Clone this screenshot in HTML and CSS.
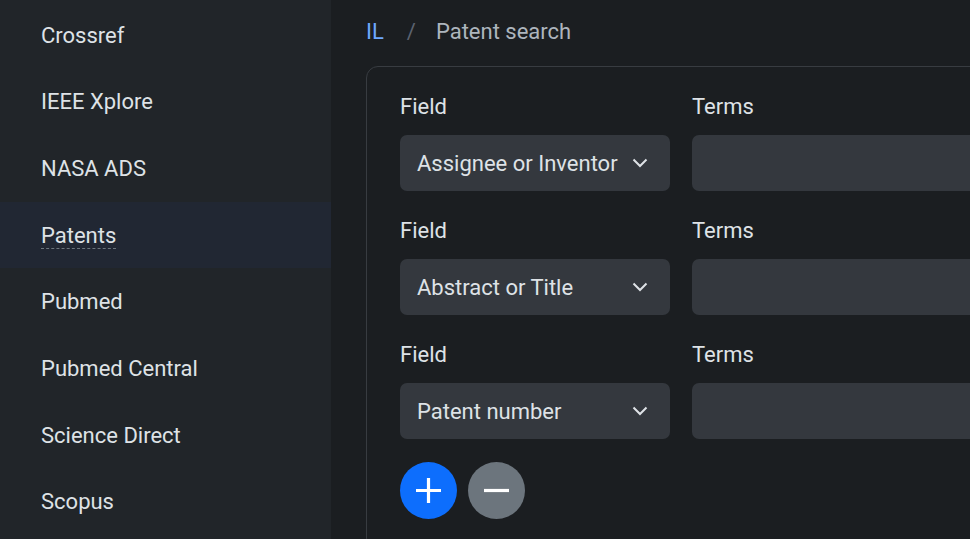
FILE: index.html
```html
<html lang="en">
<head>
    <link rel="stylesheet" href="styles.css">
</head>
<body>
    <div class="layout">
        <nav class="sidebar">
            <a class="side-item">Crossref</a>
            <a class="side-item">IEEE Xplore</a>
            <a class="side-item">NASA ADS</a>
            <a class="side-item active"><span class="dashed">Patents</span></a>
            <a class="side-item">Pubmed</a>
            <a class="side-item">Pubmed Central</a>
            <a class="side-item">Science Direct</a>
            <a class="side-item">Scopus</a>
        </nav>

        <main class="main">
            <div class="breadcrumb">
                <a class="crumb-link">IL</a>
                <span class="crumb-sep">/</span>
                <span class="crumb-current">Patent search</span>
            </div>

            <div class="search-card">
                <!-- one row per query term -->
                <div class="query-row">
                    <div class="field-col">
                        <label class="row-label">Field</label>
                        <div class="select-box">Assignee or Inventor
                            <svg class="chevron" width="16" height="10" viewBox="0 0 16 10"><polyline points="1.5,1.5 8,8 14.5,1.5" fill="none" stroke="#dee2e6" stroke-width="2"/></svg>
                        </div>
                    </div>
                    <div class="terms-col">
                        <label class="row-label">Terms</label>
                        <div class="terms-input"></div>
                    </div>
                </div>
                <div class="query-row">
                    <div class="field-col">
                        <label class="row-label">Field</label>
                        <div class="select-box">Abstract or Title
                            <svg class="chevron" width="16" height="10" viewBox="0 0 16 10"><polyline points="1.5,1.5 8,8 14.5,1.5" fill="none" stroke="#dee2e6" stroke-width="2"/></svg>
                        </div>
                    </div>
                    <div class="terms-col">
                        <label class="row-label">Terms</label>
                        <div class="terms-input"></div>
                    </div>
                </div>
                <div class="query-row">
                    <div class="field-col">
                        <label class="row-label">Field</label>
                        <div class="select-box">Patent number
                            <svg class="chevron" width="16" height="10" viewBox="0 0 16 10"><polyline points="1.5,1.5 8,8 14.5,1.5" fill="none" stroke="#dee2e6" stroke-width="2"/></svg>
                        </div>
                    </div>
                    <div class="terms-col">
                        <label class="row-label">Terms</label>
                        <div class="terms-input"></div>
                    </div>
                </div>

                <div class="row-buttons">
                    <button class="round-btn add-btn">
                        <svg width="25" height="25" viewBox="0 0 25 25"><path d="M12.5 0v25M0 12.5h25" stroke="#fff" stroke-width="3.2"/></svg>
                    </button>
                    <button class="round-btn remove-btn">
                        <svg width="25" height="25" viewBox="0 0 25 25"><path d="M0 12.5h25" stroke="#fff" stroke-width="3.2"/></svg>
                    </button>
                </div>
            </div>
        </main>
    </div>
</body>
</html>
```

FILE: styles.css
```css
body {
    font-family: Roboto, "Liberation Sans", Arial, sans-serif;
    background-color: #1b1e21;
    color: #dee2e6;
    margin: 0;
    padding: 0;
    font-size: 22px;
}
.layout {
    display: flex;
    height: 539px;
    overflow: hidden;
}
.sidebar {
    width: 331px;
    flex-shrink: 0;
    background-color: #212529;
    padding-top: 1.7px;
    display: flex;
    flex-direction: column;
}
.side-item {
    display: block;
    padding: 21px 41px 19px;
    line-height: 26.67px;
    color: #dee2e6;
}
.side-item.active {
    background-color: #212733;
}
.dashed {
    border-bottom: 1px dashed #6c757d;
}
.main {
    flex: 1;
    padding-left: 35px;
    overflow: hidden;
}
.breadcrumb {
    display: flex;
    align-items: center;
    height: 30px;
    margin-top: 17px;
    margin-bottom: 19px;
    line-height: 30px;
}
.crumb-link {
    color: #6ea8fe;
}
.crumb-sep {
    color: #5c6370;
    margin: 0 20px 0 23px;
}
.crumb-current {
    color: #adb5bd;
}
.search-card {
    width: 900px;
    border: 1px solid #383c41;
    border-radius: 12px;
    padding: 24px 33px 30px;
}
.query-row {
    display: flex;
    gap: 22px;
    margin-bottom: 24px;
}
.field-col {
    width: 270px;
    flex-shrink: 0;
}
.terms-col {
    flex: 1;
}
.row-label {
    display: block;
    line-height: 30px;
    padding-top: 1px;
    margin-bottom: 13px;
}
.select-box {
    height: 56px;
    box-sizing: border-box;
    background-color: #34383e;
    border-radius: 7px;
    display: flex;
    align-items: center;
    justify-content: space-between;
    padding: 0 22px 0 17px;
}
.chevron {
    flex-shrink: 0;
}
.terms-input {
    height: 56px;
    background-color: #34383e;
    border-radius: 7px;
}
.row-buttons {
    display: flex;
    gap: 11px;
    margin-top: -1px;
}
.round-btn {
    width: 57px;
    height: 57px;
    border-radius: 50%;
    border: none;
    display: flex;
    align-items: center;
    justify-content: center;
    padding: 0;
}
.add-btn {
    background-color: #0d6efd;
}
.remove-btn {
    background-color: #6c757d;
}
```
